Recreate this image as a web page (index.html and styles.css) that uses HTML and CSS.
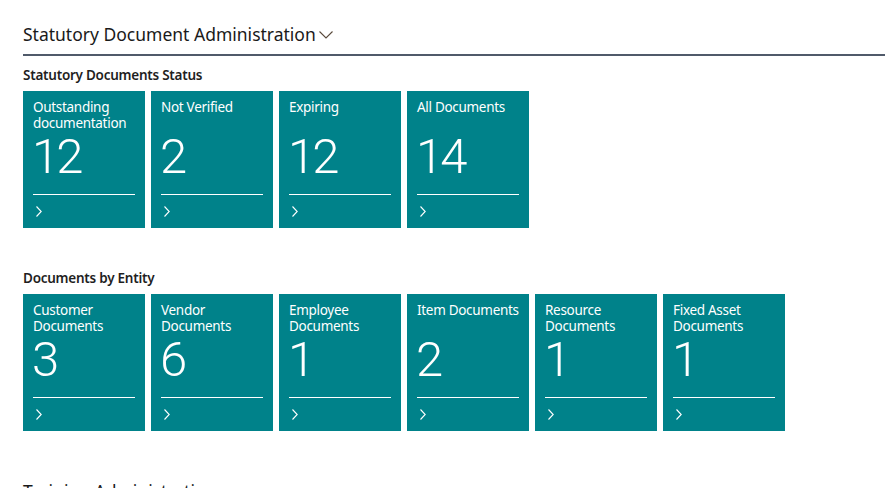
FILE: index.html
```html
<!DOCTYPE html>
<html>
<head>
<meta charset="utf-8">
<link rel="stylesheet" href="styles.css">
</head>
<body>
<div class="page">
  <div class="group">
    <h1 class="group-title">Statutory Document Administration<svg class="caret" width="14" height="8" viewBox="0 0 14 8"><polyline points="0.5,0.5 7,7 13.5,0.5" fill="none" stroke="#5a4a3c" stroke-width="1.1"/></svg></h1>
    <section class="cues">
      <h2 class="cue-title">Statutory Documents Status</h2>
      <div class="tiles">
        <a class="tile"><div class="label">Outstanding documentation</div><div class="value">12</div><div class="divider"></div><div class="foot"><svg width="6" height="11" viewBox="0 0 6 11"><polyline points="0.5,0.5 5.2,5.5 0.5,10.5" fill="none" stroke="#fff" stroke-width="1.1"/></svg></div></a>
        <a class="tile"><div class="label">Not Verified</div><div class="value">2</div><div class="divider"></div><div class="foot"><svg width="6" height="11" viewBox="0 0 6 11"><polyline points="0.5,0.5 5.2,5.5 0.5,10.5" fill="none" stroke="#fff" stroke-width="1.1"/></svg></div></a>
        <a class="tile"><div class="label">Expiring</div><div class="value">12</div><div class="divider"></div><div class="foot"><svg width="6" height="11" viewBox="0 0 6 11"><polyline points="0.5,0.5 5.2,5.5 0.5,10.5" fill="none" stroke="#fff" stroke-width="1.1"/></svg></div></a>
        <a class="tile"><div class="label">All Documents</div><div class="value">14</div><div class="divider"></div><div class="foot"><svg width="6" height="11" viewBox="0 0 6 11"><polyline points="0.5,0.5 5.2,5.5 0.5,10.5" fill="none" stroke="#fff" stroke-width="1.1"/></svg></div></a>
      </div>
    </section>
    <section class="cues">
      <h2 class="cue-title">Documents by Entity</h2>
      <div class="tiles">
        <a class="tile"><div class="label">Customer Documents</div><div class="value">3</div><div class="divider"></div><div class="foot"><svg width="6" height="11" viewBox="0 0 6 11"><polyline points="0.5,0.5 5.2,5.5 0.5,10.5" fill="none" stroke="#fff" stroke-width="1.1"/></svg></div></a>
        <a class="tile"><div class="label">Vendor Documents</div><div class="value">6</div><div class="divider"></div><div class="foot"><svg width="6" height="11" viewBox="0 0 6 11"><polyline points="0.5,0.5 5.2,5.5 0.5,10.5" fill="none" stroke="#fff" stroke-width="1.1"/></svg></div></a>
        <a class="tile"><div class="label">Employee Documents</div><div class="value">1</div><div class="divider"></div><div class="foot"><svg width="6" height="11" viewBox="0 0 6 11"><polyline points="0.5,0.5 5.2,5.5 0.5,10.5" fill="none" stroke="#fff" stroke-width="1.1"/></svg></div></a>
        <a class="tile"><div class="label">Item Documents</div><div class="value">2</div><div class="divider"></div><div class="foot"><svg width="6" height="11" viewBox="0 0 6 11"><polyline points="0.5,0.5 5.2,5.5 0.5,10.5" fill="none" stroke="#fff" stroke-width="1.1"/></svg></div></a>
        <a class="tile"><div class="label">Resource Documents</div><div class="value">1</div><div class="divider"></div><div class="foot"><svg width="6" height="11" viewBox="0 0 6 11"><polyline points="0.5,0.5 5.2,5.5 0.5,10.5" fill="none" stroke="#fff" stroke-width="1.1"/></svg></div></a>
        <a class="tile"><div class="label">Fixed Asset Documents</div><div class="value">1</div><div class="divider"></div><div class="foot"><svg width="6" height="11" viewBox="0 0 6 11"><polyline points="0.5,0.5 5.2,5.5 0.5,10.5" fill="none" stroke="#fff" stroke-width="1.1"/></svg></div></a>
      </div>
    </section>
  </div>
  <div class="group group-next">
    <h1 class="group-title plain">Training Administration</h1>
  </div>
</div>
</body>
</html>
```
FILE: styles.css
```css
html, body {
  margin: 0;
  padding: 0;
  background: #ffffff;
  overflow: hidden;
}
body {
  font-family: "Noto Sans", "Open Sans", sans-serif;
  color: #212121;
}
.page {
  padding: 20px 0 0 23px;
}
.group-title {
  margin: 0;
  font-size: 17.5px;
  font-weight: 400;
  line-height: 28px;
  padding-bottom: 6px;
  border-bottom: 2px solid #505a6a;
  display: flex;
  align-items: center;
  color: #1a1a1a;
}
.group-title.plain {
  border-bottom: none;
}
.group-next {
  margin-top: 46px;
}
.caret {
  margin-left: 3px;
  margin-top: 2px;
}
.cues {
  margin-top: 10px;
}
.cues + .cues {
  margin-top: 41px;
}
.cue-title {
  margin: 0 0 7px 0;
  font-size: 13.5px;
  font-weight: 600;
  letter-spacing: -0.25px;
  line-height: 18px;
  color: #1f1f1f;
}
.tiles {
  display: flex;
  gap: 6px;
}
.tile {
  width: 122px;
  height: 137px;
  background: #00828a;
  color: #ffffff;
  box-sizing: border-box;
  padding: 8px 10px 0 10px;
  display: flex;
  flex-direction: column;
}
.label {
  font-size: 13.5px;
  letter-spacing: -0.3px;
  line-height: 16px;
  height: 32px;
}
.value {
  font-family: "Roboto", "Open Sans", sans-serif;
  font-weight: 300;
  font-size: 49px;
  line-height: 52px;
  letter-spacing: -3px;
  margin-left: -1px;
}
.divider {
  margin-top: auto;
  height: 1px;
  background: #ffffff;
}
.foot {
  height: 33px;
  display: flex;
  align-items: center;
  padding-left: 3px;
}
.foot svg {
  display: block;
}
```
